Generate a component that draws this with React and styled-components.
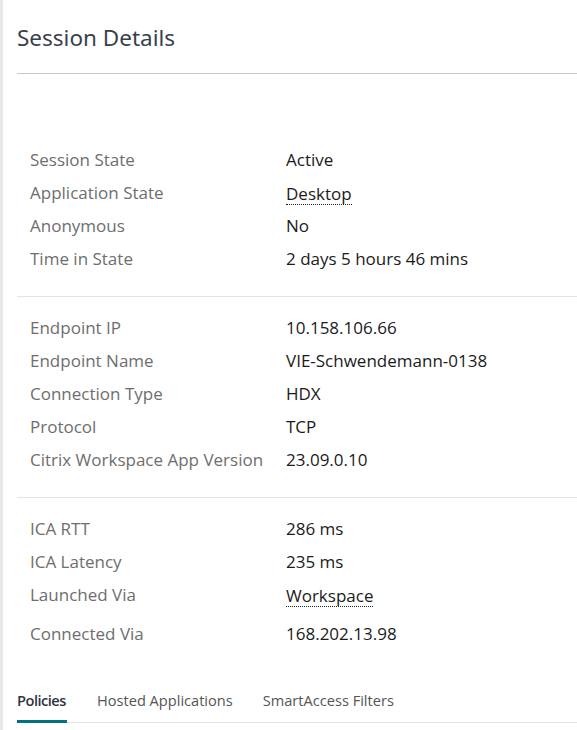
import React from "react";
import styled, { createGlobalStyle } from "styled-components";

const GlobalStyle = createGlobalStyle`
  body {
    margin: 0;
    background: #fff;
    font-family: "Open Sans", "Noto Sans", sans-serif;
  }
`;

const Panel = styled.div`
  border-left: 3px solid #e8e8e8;
  height: 730px;
  box-sizing: border-box;
  overflow: hidden;
`;

const Header = styled.div`
  padding: 24px 0 0 14px;
  height: 73px;
  box-sizing: border-box;
`;

const Title = styled.h2`
  margin: 0;
  font-family: "Noto Sans", "Open Sans", sans-serif;
  font-weight: 400;
  font-size: 22.5px;
  line-height: 28px;
  color: #3a3f4e;
`;

const Divider = styled.div`
  margin-left: 14px;
  height: 1px;
  background: ${(p) => (p.strong ? "#c8c8c8" : "#e4e4e4")};
`;

const Section = styled.div`
  padding: ${(p) => p.top}px 0 ${(p) => p.bottom}px 27px;
`;

const Row = styled.div`
  display: grid;
  grid-template-columns: 256px 1fr;
  height: 33px;
  align-items: center;
  font-size: 17px;
  margin-top: ${(p) => p.gap || 0}px;
`;

const Label = styled.span`
  color: #6e6e6e;
`;

const Value = styled.span`
  color: #1b1b1b;
`;

const Link = styled.span`
  justify-self: start;
  color: #1b1b1b;
  border-bottom: 1px dotted #222;
  line-height: 21px;
  margin-top: 3px;
`;

const Tabs = styled.div`
  display: flex;
  gap: 30px;
  margin: 40px 0 0 14px;
  border-bottom: 1px solid #e4e4e4;
`;

const Tab = styled.div`
  font-size: 14.6px;
  min-width: ${(p) => (p.active ? "50px" : "0")};
  color: ${(p) => (p.active ? "#2d3440" : "#555")};
  font-weight: ${(p) => (p.active ? 600 : 400)};
  letter-spacing: ${(p) => (p.active ? "-0.5px" : "0")};
  padding-bottom: 10px;
  border-bottom: 3px solid ${(p) => (p.active ? "#00737f" : "transparent")};
  margin-bottom: -1px;
`;

const sections = [
  {
    top: 69,
    bottom: 21,
    rows: [
      ["Session State", "Active"],
      ["Application State", "Desktop", true],
      ["Anonymous", "No"],
      ["Time in State", "2 days 5 hours 46 mins"],
    ],
  },
  {
    top: 14,
    bottom: 21,
    rows: [
      ["Endpoint IP", "10.158.106.66"],
      ["Endpoint Name", "VIE-Schwendemann-0138"],
      ["Connection Type", "HDX"],
      ["Protocol", "TCP"],
      ["Citrix Workspace App Version", "23.09.0.10"],
    ],
  },
  {
    top: 14,
    bottom: 0,
    rows: [
      ["ICA RTT", "286 ms"],
      ["ICA Latency", "235 ms"],
      ["Launched Via", "Workspace", true],
      ["Connected Via", "168.202.13.98", false, 6],
    ],
  },
];

const tabs = ["Policies", "Hosted Applications", "SmartAccess Filters"];

export default function App() {
  return (
    <>
      <GlobalStyle />
      <Panel>
        <Header>
          <Title>Session Details</Title>
        </Header>
        <Divider strong />
        {sections.map((s, i) => (
          <React.Fragment key={i}>
            {i > 0 && <Divider />}
            <Section top={s.top} bottom={s.bottom}>
              {s.rows.map(([label, value, link, gap]) => (
                <Row key={label} gap={gap}>
                  <Label>{label}</Label>
                  {link ? <Link>{value}</Link> : <Value>{value}</Value>}
                </Row>
              ))}
            </Section>
          </React.Fragment>
        ))}
        <Tabs>
          {tabs.map((t, i) => (
            <Tab key={t} active={i === 0}>
              {t}
            </Tab>
          ))}
        </Tabs>
      </Panel>
    </>
  );
}
